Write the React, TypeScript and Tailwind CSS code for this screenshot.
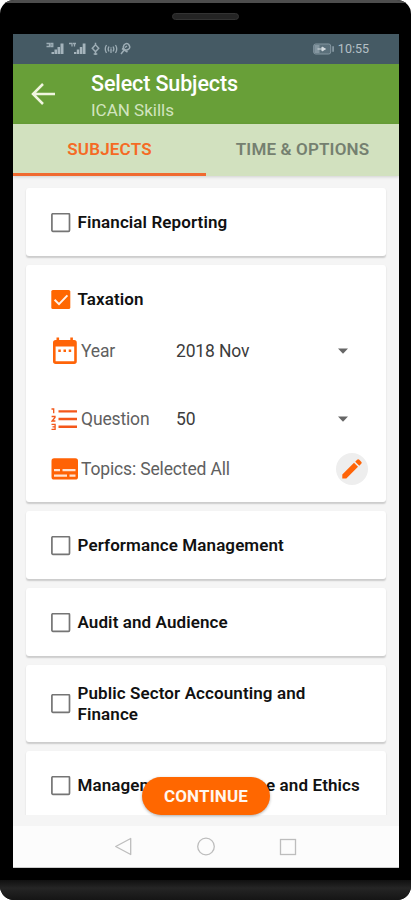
import type { ReactNode } from "react";

function Checkbox({ checked = false }: { checked?: boolean }) {
  if (checked) {
    return (
      <svg className="block size-5 shrink-0" viewBox="0 0 20 20">
        <rect x="0.3" y="0" width="19" height="19" rx="1.6" fill="#ff6700" />
        <path d="M3.6 9.8 8 14.1 16.4 5.4" fill="none" stroke="#fff2e8" strokeWidth="2" />
      </svg>
    );
  }
  return (
    <svg className="block size-5 shrink-0" viewBox="0 0 20 20">
      <rect x="0.9" y="0.7" width="17.6" height="17.6" rx="1" fill="none" stroke="#757575" strokeWidth="1.7" />
    </svg>
  );
}

function Card({ className, children }: { className: string; children: ReactNode }) {
  return (
    <section className={"shrink-0 rounded-[3px] bg-white pl-[24.5px] shadow-[0_1.5px_1.5px_rgba(0,0,0,0.17)] " + className}>
      {children}
    </section>
  );
}

function Subject({ children, checked }: { children: ReactNode; checked?: boolean }) {
  return (
    <div className="flex items-center gap-[7px]">
      <Checkbox checked={checked} />
      <h2 className="whitespace-nowrap text-[17px]/[21px] font-semibold tracking-[0.100px] text-[#111]">{children}</h2>
    </div>
  );
}

function Caret() {
  return (
    <svg className="block h-[6px] w-[10px]" viewBox="0 0 10 6">
      <path d="M0 0.5h10L5 5.7z" fill="#666" />
    </svg>
  );
}

function CalendarIcon() {
  return (
    <svg className="block h-[28px] w-[26px]" viewBox="0 0 26 28">
      <path
        fillRule="evenodd"
        fill="#ff6408"
        d="M4.5 0.5h2.6v2.5h11.2V0.5h2.6v2.5h1.2q2.7 0 2.7 2.7v18.6q0 2.7-2.7 2.7H3.7Q1 27 1 24.3V5.700Q1 3 3.700 3h0.800zM3.600 9.500v14.700h18.600V9.500z"
      />
      <path d="M6.300 12.500h2.500v2.500H6.300zM11.500 12.500h2.500v2.500h-2.500zM16.700 12.500h2.500v2.500h-2.500z" fill="#ff6408" />
    </svg>
  );
}

function NumberedListIcon() {
  return (
    <svg className="block h-[24px] w-[27px]" viewBox="0 0 27 24" fill="none" stroke="#f4571a">
      <path d="M7.500 4.400h18.500M7.500 12h18.500M7.500 19.800h18.500" strokeWidth="2.400" />
      <path d="M0.500 2h2.200v4.300M0.600 9.500h3.400v1l-3 3.500h3.400M0.500 17.300h3.600v5H0.500M1.500 19.800h2.600" strokeWidth="1.300" />
    </svg>
  );
}

function TopicsIcon() {
  return (
    <svg className="block h-[22px] w-[27px]" viewBox="0 0 27 22">
      <rect x="0.500" y="0.300" width="26.500" height="21.200" rx="2.600" fill="#ff6205" />
      <path d="M3 12.200h6M11.500 12.200H24.500M3 17.700h13M18.500 17.700h6" stroke="#ffe3d2" strokeWidth="2.300" />
    </svg>
  );
}

function StatusIcons() {
  return (
    <svg className="block h-[14px] w-[86px]" viewBox="0 0 86 14" fill="none" stroke="#9dadb5" strokeWidth="1.500">
      <path d="M0.500 1.500h3v3h-3M5 1.500v3h1.800V1.500zM23 1.500h3v3M27 1.500h3M28.500 1.500v3" strokeWidth="1.300" />
      <path
        d="M5.500 12h2.500V10H5.500zM8.500 12h2.500V7.500H8.500zM11.500 12h2.500V5h-2.500zM14.500 12h3V1.500h-3zM28 12h2.300V10H28zM30.800 12h2.400V7.500h-2.400zM33.800 12h2.400V5h-2.400zM36.700 12h2.800V1.500h-2.800z"
        fill="#a5b4bc"
        stroke="none"
      />
      <path d="M49.500 0.800v2M49.500 9.500v3.500M46.300 6.200 49.500 2.800l3.200 3.400-3.200 3.500zM47.700 12h3.600" />
      <path d="M60.500 3q-2.500 4 0 8M63 4.500q-1.700 2.500 0 5M69.500 3q2.500 4 0 8M67 4.500q1.700 2.500 0 5M65 7v4M64.500 6h1" strokeWidth="1.300" />
      <path d="M75 12l3.500-4.500M78 3q3-3 5 0t-1 4.500q-2.500 1.500-4-.5T78 3M76 6.500l5.500 3.500M79 5.500l2-1.500" />
    </svg>
  );
}

export default function App() {
  return (
    <div className="h-[900px] w-[411px] bg-white font-[Roboto,sans-serif]">
      <div className="flex h-[900px] w-[411px] flex-col overflow-hidden rounded-[14px] bg-black">
        <div className="flex h-[34px] shrink-0 justify-center border-t-[3px] border-[#4d4d4d] pt-[10px]">
          <div className="h-[7px] w-[67px] rounded-full border border-[#333] bg-[#242424]" />
        </div>

        <div className="mx-[13px] flex h-[834px] w-[386px] shrink-0 flex-col overflow-hidden bg-[#f5f5f5]">
          <div className="flex h-[30px] shrink-0 items-center justify-between bg-[#455a64] pr-[30px] pl-[33px]">
            <StatusIcons />
            <div className="flex items-center gap-[4px]">
              <svg className="block h-[12px] w-[21px]" viewBox="0 0 21 12">
                <rect x="0.700" y="1" width="17" height="10" rx="2" fill="#5b707b" stroke="#8496a0" />
                <path d="M1.500 2h5v8h-5zM19.200 3.300H21v5.400h-1.800z" fill="#8496a0" />
                <path d="M4.500 6h6M9 4 12.500 6l-3.500 2z" stroke="#d4dce0" fill="#d4dce0" strokeWidth="1" />
              </svg>
              <span className="text-[12.500px] text-[#b5c0c6]">10:55</span>
            </div>
          </div>

          <header className="flex h-[60px] shrink-0 bg-[#689f38] pt-[8px] pl-[18px]">
            <svg className="mt-[11px] mr-[36px] block h-[22px] w-[24px]" viewBox="0 0 24 22" fill="none" stroke="#f0f5df" strokeWidth="2.500">
              <path d="M24 11H2M12 1 2 11l10 10" />
            </svg>
            <div>
              <h1 className="text-[21.500px]/[24px] font-medium tracking-[-0.120px] text-white">Select Subjects</h1>
              <p className="mt-[4px] text-[17px]/[20px] text-[#d2e4bf]">ICAN Skills</p>
            </div>
          </header>

          <nav className="z-10 flex h-[52px] shrink-0 bg-[#d2e1bf] text-[17px] font-semibold shadow-[0_1px_3px_rgba(0,0,0,0.150)]">
            <button className="flex w-[193px] items-center justify-center border-b-[3px] border-[#f06a30] pt-[3px] tracking-[0.200px] text-[#f56a24]">SUBJECTS</button>
            <button className="flex w-[193px] items-center justify-center tracking-[0.150px] text-[#758070]">TIME &amp; OPTIONS</button>
          </nav>

          <main className="flex h-[639px] shrink-0 flex-col gap-[9px] overflow-hidden px-[13px] pt-[12px]">
            <Card className="h-[68px] pt-[24px]">
              <Subject>Financial Reporting</Subject>
            </Card>
            <Card className="h-[237px] pt-[24px]">
              <Subject checked>Taxation</Subject>
              <div className="mt-[27px] grid grid-cols-[30.500px_95px_162px_auto] items-center text-[17.500px]/[28px] tracking-[-0.150px] text-[#606060]">
                <div className="pl-[1px]"><CalendarIcon /></div>
                <span>Year</span>
                <span className="text-[#3c3c3c]">2018 Nov</span>
                <Caret />
              </div>
              <div className="mt-[40px] grid grid-cols-[30.500px_95px_162px_auto] items-center text-[17.500px]/[28px] tracking-[-0.150px] text-[#606060]">
                <NumberedListIcon />
                <span>Question</span>
                <span className="text-[#3c3c3c]">50</span>
                <Caret />
              </div>
              <div className="mt-[20px] flex h-[32px] items-center text-[17.500px] tracking-[-0.150px] text-[#606060]">
                <TopicsIcon />
                <span className="ml-[3.500px] w-[255px] pt-px">Topics: Selected All</span>
                <button className="flex size-[32px] items-center justify-center rounded-full bg-[#eee]">
                  <svg className="block size-[20px]" viewBox="0 0 20 20" fill="#ff6408">
                    <path d="M0.300 15.500 12 3.800l4 4L4.300 19.500H0.300zM13.200 2.700l1.900-1.900q1-1 2.200 0L19.200 2.700q1 1 0 2.100l-1.900 1.900z" />
                  </svg>
                </button>
              </div>
            </Card>
            <Card className="h-[68px] pt-[24px]">
              <Subject>Performance Management</Subject>
            </Card>
            <Card className="h-[68px] pt-[24px]">
              <Subject>Audit and Audience</Subject>
            </Card>
            <Card className="h-[77px] pt-[18px]">
              <Subject>Public Sector Accounting and<br />Finance</Subject>
            </Card>
            <Card className="h-[68px] pt-[24px]">
              <Subject>Management Governance and Ethics</Subject>
            </Card>
          </main>

          <div className="relative h-[11px] shrink-0">
            <button className="absolute -top-[38px] left-[129px] h-[38px] w-[128px] rounded-full bg-[#ff6700] pt-px text-[17px] font-bold tracking-[0.150px] text-[#fff6ef] shadow-[0_1px_3px_rgba(0,0,0,0.300)]">
              CONTINUE
            </button>
          </div>

          <footer className="flex h-[42px] shrink-0 justify-center border-b border-[#ccc] bg-[#fcfcfc] pt-[11px]">
            <svg className="block h-[20px] w-[184px]" viewBox="0 0 184 20" fill="none" stroke="#bdbdbd" strokeWidth="1.300">
              <path d="M16.700 1.500v16L1.700 9.500z" strokeLinejoin="round" />
              <circle cx="92" cy="9.500" r="8.300" />
              <rect x="166.500" y="2.500" width="15" height="15" />
            </svg>
          </footer>
        </div>

        <div className="mt-[12px] h-[20px] shrink-0 bg-linear-to-b from-[#101010] via-[#252525] via-40% to-[#151515]" />
      </div>
    </div>
  );
}
